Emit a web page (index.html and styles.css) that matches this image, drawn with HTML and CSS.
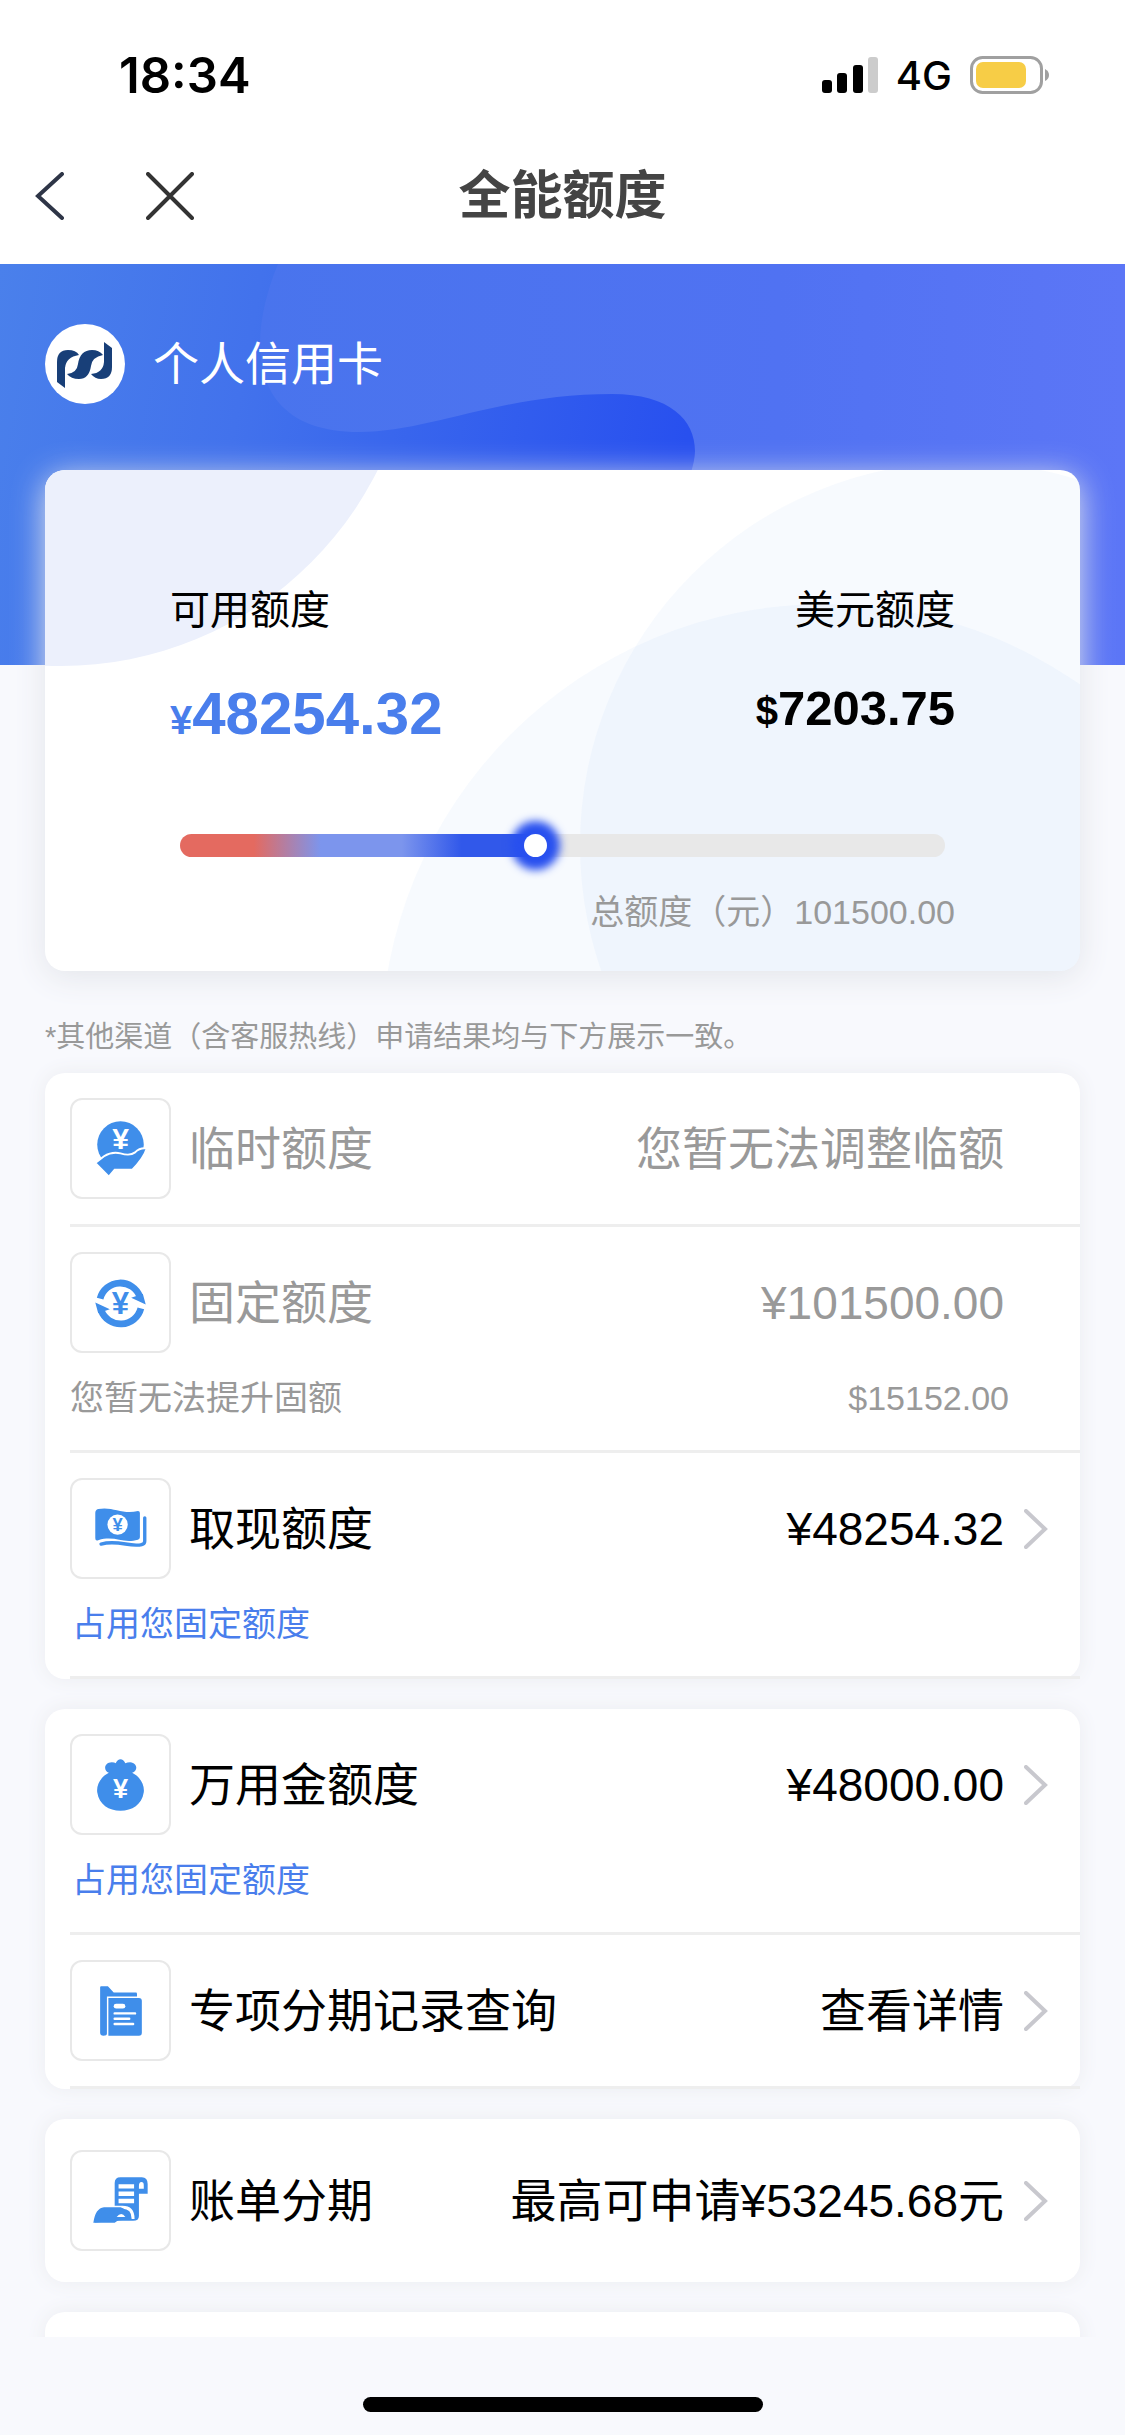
FILE: index.html
```html
<!DOCTYPE html>
<html lang="zh-CN">
<head>
  <meta charset="utf-8">
  <meta name="viewport" content="width=device-width">
  <title>全能额度</title>
  <link rel="stylesheet" href="styles.css">
</head>
<body>
<header>
  <div class="status">
    <span class="time">18:34</span>
    <svg class="signal" width="56" height="36" viewBox="0 0 56 36">
      <rect x="0" y="23" width="10" height="13" rx="3"/>
      <rect x="15" y="16" width="10" height="20" rx="3"/>
      <rect x="31" y="8" width="10" height="28" rx="3"/>
      <rect x="46" y="0" width="10" height="36" rx="3" fill="#ccc"/>
    </svg>
    <span class="network">4G</span>
    <svg width="80" height="38" viewBox="0 0 80 38">
      <rect x="1.5" y="1.5" width="70" height="35" rx="11" fill="#fff" stroke="#a0a0a0" stroke-width="3"/>
      <rect x="6" y="6" width="50" height="26" rx="7" fill="#f7cd46"/>
      <path d="M75 13Q79 15 79 19Q79 23 75 25Z" fill="#a0a0a0"/>
    </svg>
  </div>
  <nav>
    <div class="navButtons">
      <button type="button" aria-label="返回">
        <svg width="48" height="48" viewBox="0 0 48 48"><path d="M38 2L14 24L38 46" stroke="#2e3547"/></svg>
      </button>
      <button type="button" aria-label="关闭">
        <svg width="48" height="48" viewBox="0 0 48 48"><path d="M2 2L46 46M46 2L2 46" stroke="#333"/></svg>
      </button>
    </div>
    <h1>全能额度</h1>
  </nav>
</header>

<main>
  <div class="hero">
    <svg class="heroShape" viewBox="0 0 1125 401" preserveAspectRatio="none">
      <defs>
        <linearGradient id="wave" x1="0" x2="1" y1="0" y2="0">
          <stop offset="0" stop-color="#4974ed"/>
          <stop offset="0.6" stop-color="#5072f2"/>
          <stop offset="1" stop-color="#5c76f6"/>
        </linearGradient>
      </defs>
      <path fill="url(#wave)" d="M278 0C245 80 250 168 359 168C430 168 500 130 612 130C670 130 695 156 695 187Q695 196 690 212L640 401H1125V0Z"/>
    </svg>
    <div class="account">
      <svg width="80" height="80" viewBox="0 0 80 80">
        <circle cx="40" cy="40" r="40" fill="#fff"/>
        <g fill="#183f78">
          <path d="M12 58V38Q12 26 23 26Q31 26 34 31Q21 33 20 44V64Z"/>
          <path d="M22 50Q32 49 33 40Q35 26 47 26Q54 26 58 31Q47 33 46 42Q44 55 34 55Q26 55 22 50Z"/>
          <path d="M46 50Q58 49 59 38V18L67 24V43Q67 55 56 55Q50 55 46 50Z"/>
        </g>
      </svg>
      <span>个人信用卡</span>
    </div>
  </div>

  <section class="summary">
    <svg class="summaryShape" viewBox="0 0 1035 501" preserveAspectRatio="none">
      <circle cx="16" cy="-158" r="354" fill="#ecf0fc"/>
      <circle cx="918" cy="375" r="383" fill="#5082e0" fill-opacity="0.045"/>
      <circle cx="780" cy="578" r="444" fill="#5082e0" fill-opacity="0.045"/>
    </svg>
    <div class="amounts">
      <div>
        <h2>可用额度</h2>
        <div class="cny"><span>¥</span>48254.32</div>
      </div>
      <div>
        <h2>美元额度</h2>
        <div class="usd"><span>$</span>7203.75</div>
      </div>
    </div>
    <input class="usage" type="range" min="0" max="1000" value="464" aria-label="可用额度">
    <p class="total">总额度（元）101500.00</p>
  </section>

  <p class="note">*其他渠道（含客服热线）申请结果均与下方展示一致。</p>

  <section class="card">
    <div class="row disabled">
      <div class="line">
        <svg class="icon" viewBox="0 0 100 100">
          <circle cx="50" cy="46" r="24"/>
          <text class="white" x="50" y="51" font-size="31">¥</text>
          <path stroke="#fff" stroke-width="2" d="M24 65L33 58Q41 53 50 55Q60 58 65 54Q70 49 77 50Q74 60 62 72H44L38 79Z"/>
        </svg>
        <span class="name">临时额度</span>
        <span class="value">您暂无法调整临额</span>
      </div>
    </div>
    <div class="row disabled">
      <div class="line">
        <svg class="icon" viewBox="0 0 100 100">
          <g id="turn">
            <path d="M29 46A21.500 21.500 0 0 1 70 44" fill="none" stroke="#3f8eea" stroke-width="7"/>
            <path d="M76 52L61 45L67 43L73 41Z"/>
          </g>
          <use href="#turn" transform="rotate(180 50 51)"/>
          <text x="50" y="62" font-size="32">¥</text>
        </svg>
        <span class="name">固定额度</span>
        <span class="value">¥101500.00</span>
      </div>
      <div class="sub"><span>您暂无法提升固额</span><span>$15152.00</span></div>
    </div>
    <a class="row" href="#cash">
      <div class="line">
        <svg class="icon" viewBox="0 0 100 100">
          <path d="M24 34Q24 31 27 30C42 27 52 36 68 32Q70 32 70 34V59Q70 61 68 61.500C52 66 45 57 27 62Q24 63 24 60Z"/>
          <path d="M75 39V63Q75 66 72 66.500C60 70 48 61 30 66" fill="none" stroke="#3f8eea" stroke-width="3.500" stroke-linecap="round"/>
          <circle class="white" cx="47" cy="46" r="10.500"/>
          <text x="47" y="52.500" font-size="19">¥</text>
        </svg>
        <span class="name">取现额度</span>
        <span class="value">¥48254.32</span>
        <svg class="arrow" viewBox="0 0 24 40"><path d="M2 2L21 20L2 38"/></svg>
      </div>
      <div class="sub occupied">占用您固定额度</div>
    </a>
  </section>

  <section class="card">
    <a class="row" href="#flexible">
      <div class="line">
        <svg class="icon" viewBox="0 0 100 100">
          <path d="M38 38C32 36 33 27 41 27Q44 27 45 28Q47 24 50 24Q53 24 55 28Q57 27 60 27C68 28 68 36 62 38C70 42 75 50 74 58C72 71 62 77 50 77C38 77 28 71 26 58C25 50 30 42 38 38Z"/>
          <text class="white" x="50" y="64" font-size="28">¥</text>
        </svg>
        <span class="name">万用金额度</span>
        <span class="value">¥48000.00</span>
        <svg class="arrow" viewBox="0 0 24 40"><path d="M2 2L21 20L2 38"/></svg>
      </div>
      <div class="sub occupied">占用您固定额度</div>
    </a>
    <a class="row" href="#records">
      <div class="line">
        <svg class="icon" viewBox="0 0 100 100">
          <path d="M29 26Q29 25 30 25H37L43 31.500H66Q67 31.500 67 33V35.500H36V74Q36 76 32.500 76Q29 76 29 73Z"/>
          <path d="M38 37H69Q72 37 72 40V73Q72 76 69 76H37.500V37Z"/>
          <rect class="white" x="43" y="43" width="12" height="5" rx="2.500"/>
          <path d="M44 53H65M44 58.500H59M44 64H63" stroke="#fff" stroke-width="2.500" stroke-linecap="round"/>
        </svg>
        <span class="name">专项分期记录查询</span>
        <span class="value">查看详情</span>
        <svg class="arrow" viewBox="0 0 24 40"><path d="M2 2L21 20L2 38"/></svg>
      </div>
    </a>
  </section>

  <section class="card">
    <a class="row single" href="#bill">
      <div class="line">
        <svg class="icon" viewBox="0 0 100 100">
          <path d="M44 32Q44 26 50 26H72Q78 26 78 33V43H69V66Q69 71 63 71H44Z"/>
          <path class="white" d="M69 38V35Q69 31 71.500 31Q74 31 74 34V38Z"/>
          <path d="M48 35.500H64M48 43H64M48 50.500H64" stroke="#fff" stroke-width="4.500"/>
          <path d="M22 73Q23 58 33 57H52Q63 57 63 69" stroke="#fff" stroke-width="3"/>
          <path d="M22 73Q24 58 33 57H50Q57 58 58 70H48L44 73Z"/>
          <path class="white" d="M46 67Q51 61 55 67Z"/>
        </svg>
        <span class="name">账单分期</span>
        <span class="value">最高可申请¥53245.68元</span>
        <svg class="arrow" viewBox="0 0 24 40"><path d="M2 2L21 20L2 38"/></svg>
      </div>
    </a>
  </section>

  <section class="card next"></section>
</main>

<footer><div class="home"></div></footer>
</body>
</html>
```

FILE: styles.css
```css
* {
  box-sizing: border-box;
}
body {
  margin: 0;
  height: 100vh;
  display: flex;
  flex-direction: column;
  background: #f8f9fd;
  color: #000;
  font-family: "Liberation Sans", "Noto Sans CJK SC", sans-serif;
}
h1, h2, p {
  margin: 0;
  font-weight: normal;
}
svg {
  display: block;
  flex: none;
}

/* top bars */
header {
  flex: none;
  background: #fff;
}
.status {
  display: flex;
  align-items: center;
  gap: 18px;
  height: 127px;
  padding: 23px 75px 0 119px;
  font-family: Inter, sans-serif;
}
.time {
  margin-right: auto;
  font-size: 49px;
  font-weight: 600;
}
.network {
  font-size: 40px;
  font-weight: 500;
}
nav {
  display: grid;
  grid-template-columns: 1fr auto 1fr;
  align-items: center;
  height: 137px;
  padding: 0 24px;
}
.navButtons {
  display: flex;
  gap: 74px;
}
nav button {
  padding: 0;
  border: 0;
  background: none;
}
nav path {
  fill: none;
  stroke-width: 4;
  stroke-linecap: round;
}
nav h1 {
  font-size: 52px;
  font-weight: bold;
  line-height: 72px;
  color: #444;
}

/* scrolling content */
main {
  flex: 1 1 0;
  min-height: 0;
  overflow-y: auto;
  scrollbar-width: none;
}
.hero {
  position: relative;
  height: 401px;
  padding: 60px 45px;
  background: linear-gradient(100deg, #4a80eb 0%, #4272ec 22%, #2850ef 60%);
}
.heroShape {
  position: absolute;
  top: 0;
  left: 0;
  width: 100%;
  height: 100%;
}
.account {
  position: relative;
  display: flex;
  align-items: center;
  gap: 28px;
  color: #fff;
  font-size: 46px;
  line-height: 64px;
}

.summary {
  position: relative;
  margin: -195px 45px 0;
  padding: 112px 125px 35px;
  border-radius: 20px;
  background: #fff;
  box-shadow: 0 6px 32px #e3e5ea;
}
.summaryShape {
  position: absolute;
  top: 0;
  left: 0;
  width: 100%;
  height: 100%;
  border-radius: 20px;
}
.amounts {
  position: relative;
  display: flex;
  justify-content: space-between;
  text-align: right;
}
.amounts > div:first-child {
  text-align: left;
}
.amounts h2 {
  margin-bottom: 40px;
  font-size: 40px;
  line-height: 56px;
}
.amounts span {
  font-size: 40px;
  line-height: 1;
}
.cny {
  color: #497eec;
  font-size: 60px;
  font-weight: bold;
  line-height: 72px;
}
.usd {
  font-size: 49px;
  font-weight: bold;
  line-height: 60px;
}
.usage {
  -webkit-appearance: none;
  appearance: none;
  position: relative;
  display: block;
  width: calc(100% - 20px);
  height: 23px;
  margin: 84px 10px 31px;
  border-radius: 12px;
  background: linear-gradient(90deg, #e46a60 21%, #7c95ed 40%, #7c95ed 63%, #3158ea 80%) no-repeat #e8e8e8;
  background-size: 46% 100%;
}
.usage::-webkit-slider-thumb {
  -webkit-appearance: none;
  width: 23px;
  height: 23px;
  border-radius: 50%;
  background: #fff;
  box-shadow: 0 0 9px 13px #2850ef;
}
.total {
  position: relative;
  color: #999;
  font-size: 34px;
  line-height: 48px;
  text-align: right;
}
.note {
  margin: 45px 45px 15px;
  color: #999;
  font-size: 29px;
  line-height: 42px;
}

/* lists */
.card {
  margin: 0 45px 30px;
  padding-left: 25px;
  border-radius: 20px;
  background: #fff;
  box-shadow: 0 0 20px #ebecf0;
}
.row {
  display: block;
  padding: 25px 0;
  border-bottom: 3px solid #eee;
  color: #000;
  text-decoration: none;
}
.row.single {
  padding: 31px 0;
  border: 0;
}
.row.disabled {
  color: #999;
}
.line {
  display: flex;
  align-items: center;
  padding-right: 76px;
  font-size: 46px;
  line-height: 64px;
}
.icon {
  width: 101px;
  height: 101px;
  margin-right: 18px;
  border: 2px solid #e8e8e8;
  border-radius: 12px;
  fill: #3f8eea;
}
.icon text {
  font-weight: bold;
  text-anchor: middle;
}
.icon .white {
  fill: #fff;
}
.value {
  margin-left: auto;
}
.arrow {
  width: 24px;
  height: 40px;
  margin: 0 -44px 0 20px;
}
.arrow path {
  fill: none;
  stroke: #c8c8ce;
  stroke-width: 4;
  stroke-linecap: round;
}
.sub {
  display: flex;
  justify-content: space-between;
  margin-top: 20px;
  padding: 0 71px 2px 0;
  font-size: 34px;
  line-height: 50px;
}
.occupied {
  padding-left: 2px;
  color: #497eec;
}
.next {
  height: 166px;
}

footer {
  flex: none;
  display: flex;
  justify-content: center;
  padding: 60px 0 23px;
}
.home {
  width: 400px;
  height: 15px;
  border-radius: 8px;
  background: #000;
}
```
